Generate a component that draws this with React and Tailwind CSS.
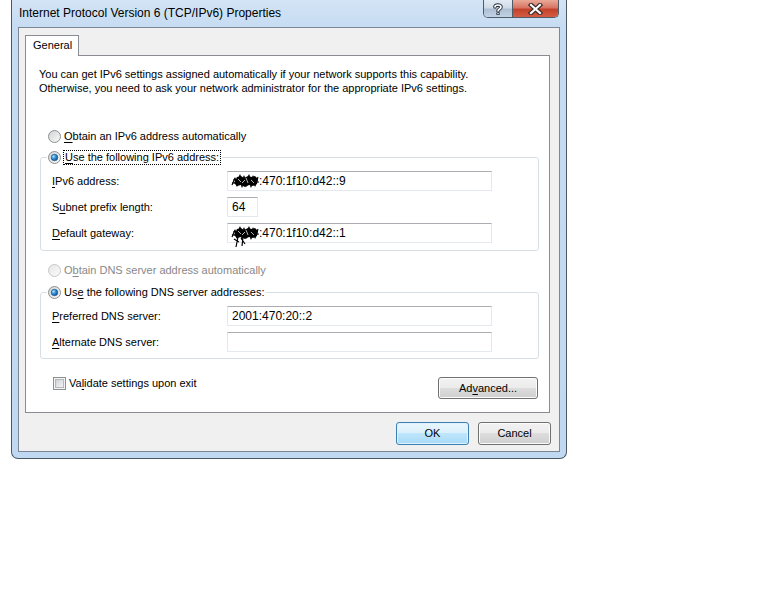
import React from 'react';

const Key = ({ children }) => <span className="underline underline-offset-[2px] decoration-1">{children}</span>;

const Radio = ({ checked, disabled, id }) => (
    <svg width="13" height="13" viewBox="0 0 13 13" className="shrink-0">
        <defs>
            <linearGradient id={`rf-${id}`} x1="0" y1="0" x2="1" y2="1">
                <stop offset="0" stopColor={disabled ? '#e6e6e6' : '#cfd1d3'} />
                <stop offset="1" stopColor="#fbfbfb" />
            </linearGradient>
            <radialGradient id={`rd-${id}`} cx="0.35" cy="0.35" r="0.75">
                <stop offset="0" stopColor="#a8e4ff" />
                <stop offset="0.45" stopColor="#2f8fd8" />
                <stop offset="1" stopColor="#0d4a85" />
            </radialGradient>
        </defs>
        <circle cx="6.5" cy="6.5" r="6" fill={`url(#rf-${id})`} stroke={disabled ? '#c6c6c6' : '#8e8f8f'} />
        {checked && <circle cx="6.5" cy="6.5" r="3.3" fill={`url(#rd-${id})`} stroke="#1b4f7e" strokeWidth="0.6" />}
    </svg>
);

const Checkbox = () => (
    <svg width="13" height="13" viewBox="0 0 13 13" className="shrink-0">
        <defs>
            <linearGradient id="cbf" x1="0" y1="0" x2="1" y2="1">
                <stop offset="0" stopColor="#cbcfd5" />
                <stop offset="1" stopColor="#f7f7f7" />
            </linearGradient>
        </defs>
        <rect x="0.5" y="0.5" width="12" height="12" fill="#f4f4f4" stroke="#8e8f8f" />
        <rect x="2.5" y="2.5" width="8" height="8" fill="url(#cbf)" stroke="#b4b8bd" />
    </svg>
);

// redaction scribble over the address prefix
const Scribble = ({ tail }) => (
    <svg width="27" height="14" viewBox="0 0 27 14" overflow="visible" className="shrink-0">
        <path d="M2 9 L5 3 L9 2 L12 4 L16 2 L20 3 L23 2 L26 5 L25 10 L21 12 L17 11 L13 13 L9 11 L5 12 Z" fill="#000" />
        <g fill="none" stroke="#000" strokeWidth="1.2" strokeLinejoin="round">
            <path d="M0 11 L3 4 L5 12 L8 1 L10 13 L12 2 L14 12 L17 1 L19 13 L21 2 L23 12 L26 3" />
            <path d="M1 6 L26 5 M0 9 L27 8" />
            {tail && <path d="M6 11 L4 21 M9 12 L13 18 M2 13 L7 16 M11 11 L10 20" />}
        </g>
        <g fill="none" stroke="#fff" strokeWidth="0.7">
            <path d="M6 5 L9 8 M14 4 L16 9 M19 6 L22 9 M10 9 L13 6" />
        </g>
    </svg>
);

const Field = ({ children, className = 'w-[265px]' }) => (
    <div className={`${className} h-[20px] flex items-center bg-white border border-[#e3e9ef] border-t-[#abadb3] pl-[4px] text-[12px]`}>
        {children}
    </div>
);

const Row = ({ label, children }) => (
    <div className="flex items-center h-[20px] pl-[11px]">
        <div className="w-[175px]">{label}</div>
        {children}
    </div>
);

const Button = ({ children, primary, className }) => (
    <div
        className={`${className} flex items-center justify-center rounded-[3px] border ${primary
            ? 'border-[#3c7fb1] bg-[linear-gradient(#eaf6fd_0%,#d9f0fc_50%,#bee6fd_50%,#a7d9f5_100%)] shadow-[inset_0_0_0_1px_#def3fc]'
            : 'border-[#707070] bg-[linear-gradient(#f2f2f2_0%,#ebebeb_50%,#dddddd_50%,#cfcfcf_100%)] shadow-[inset_0_0_0_1px_#fcfcfc]'
            }`}
    >
        {children}
    </div>
);

export default function App() {
    return (
        <div className="w-[768px] h-[614px] bg-white pl-[11px] font-['Liberation_Sans',Arial,sans-serif] text-[11px] leading-[15px] text-black">
            <div className="w-[556px] h-[459px] flex flex-col border border-t-0 border-[#4e5865] rounded-b-[7px] bg-[linear-gradient(180deg,#d3e4f5_0%,#c6dcf2_6%,#c0d8f1_100%)] px-[6px] pb-[6px]">
                {/* title bar */}
                <div className="h-[27px] flex items-start justify-between">
                    <div className="pt-[6px] pl-[1px] text-[12px]">Internet Protocol Version 6 (TCP/IPv6) Properties</div>
                    <div className="flex h-[18px] mr-[1px] rounded-b-[5px] border border-t-0 border-[#4f5b69] overflow-hidden">
                        <div className="w-[29px] flex items-center justify-center border-r border-[#4f5b69] bg-[linear-gradient(#e3ebf4_0%,#cfdbe8_45%,#aebfd3_55%,#c2d3e6_100%)]">
                            <svg width="10" height="12" viewBox="0 0 10 12">
                                <path d="M2 4 C2 1.5 8 1.2 8 4 C8 6 5 6 5 8 M5 10.5 L5 10.6" fill="none" stroke="#2c3440" strokeWidth="3.6" strokeLinecap="round" />
                                <path d="M2 4 C2 1.5 8 1.2 8 4 C8 6 5 6 5 8 M5 10.5 L5 10.6" fill="none" stroke="#fff" strokeWidth="1.6" strokeLinecap="round" />
                            </svg>
                        </div>
                        <div className="w-[45px] flex items-center justify-center bg-[linear-gradient(#eaa999_0%,#d87563_45%,#c2412b_55%,#d65c44_100%)]">
                            <svg width="15" height="12" viewBox="0 0 15 12">
                                <path d="M3 2 L12 10 M12 2 L3 10" stroke="#3a2a28" strokeWidth="4.4" strokeLinecap="square" />
                                <path d="M3 2 L12 10 M12 2 L3 10" stroke="#fff" strokeWidth="2.2" strokeLinecap="square" />
                            </svg>
                        </div>
                    </div>
                </div>

                {/* client area */}
                <div className="flex-1 flex flex-col border border-[#7b8795] bg-[#f0f0f0] pl-[6px] pt-[7px]">
                    <div className="relative z-10 -mb-px w-[54px] h-[21px] border border-b-0 border-[#898c95] bg-white pl-[7px] pt-[2px]">
                        General
                    </div>
                    <div className="w-[525px] h-[358px] flex flex-col border border-[#898c95] bg-white">
                        <p className="ml-[13px] mt-[11px] leading-[14px]">
                            You can get IPv6 settings assigned automatically if your network supports this capability.
                            <br />
                            Otherwise, you need to ask your network administrator for the appropriate IPv6 settings.
                        </p>

                        <div className="mt-[34px] ml-[22px] h-[15px] flex items-center gap-[3px]">
                            <Radio id="a" />
                            <span><Key>O</Key>btain an IPv6 address automatically</span>
                        </div>

                        <fieldset className="mt-[6px] ml-[14px] w-[499px] border border-[#d5dfe5] rounded-[3px] pb-[7px]">
                            <legend className="ml-[6px] px-[1px]">
                                <div className="h-[15px] flex items-center gap-[2px]">
                                    <Radio id="b" checked />
                                    <span className="border border-dotted border-black px-[1px] leading-[13px]">
                                        <Key>U</Key>se the following IPv6 address:
                                    </span>
                                </div>
                            </legend>
                            <div className="pt-[6px] flex flex-col gap-[6px]">
                                <Row label={<><Key>I</Key>Pv6 address:</>}>
                                    <Field><Scribble /><span>:470:1f10:d42::9</span></Field>
                                </Row>
                                <Row label={<>S<Key>u</Key>bnet prefix length:</>}>
                                    <Field className="w-[31px]">64</Field>
                                </Row>
                                <Row label={<><Key>D</Key>efault gateway:</>}>
                                    <Field><Scribble tail /><span>:470:1f10:d42::1</span></Field>
                                </Row>
                            </div>
                        </fieldset>

                        <div className="mt-[12px] ml-[22px] h-[15px] flex items-center gap-[3px] text-[#888]">
                            <Radio id="c" disabled />
                            <span>O<Key>b</Key>tain DNS server address automatically</span>
                        </div>

                        <fieldset className="mt-[7px] ml-[14px] w-[499px] border border-[#d5dfe5] rounded-[3px] pb-[6px]">
                            <legend className="ml-[6px] px-[1px]">
                                <div className="h-[15px] flex items-center gap-[3px]">
                                    <Radio id="d" checked />
                                    <span>Us<Key>e</Key> the following DNS server addresses:</span>
                                </div>
                            </legend>
                            <div className="pt-[6px] flex flex-col gap-[6px]">
                                <Row label={<><Key>P</Key>referred DNS server:</>}>
                                    <Field>2001:470:20::2</Field>
                                </Row>
                                <Row label={<><Key>A</Key>lternate DNS server:</>}>
                                    <Field />
                                </Row>
                            </div>
                        </fieldset>

                        <div className="mt-[18px] flex items-start justify-between">
                            <div className="ml-[27px] h-[13px] flex items-center gap-[3px]">
                                <Checkbox />
                                <span>Va<Key>l</Key>idate settings upon exit</span>
                            </div>
                            <Button className="w-[100px] h-[22px] mr-[11px]">
                                <span>Ad<Key>v</Key>anced...</span>
                            </Button>
                        </div>
                    </div>

                    <div className="w-[526px] mt-[9px] flex justify-end gap-[9px]">
                        <Button primary className="w-[73px] h-[23px]">OK</Button>
                        <Button className="w-[73px] h-[23px]">Cancel</Button>
                    </div>
                </div>
            </div>
        </div>
    );
}
